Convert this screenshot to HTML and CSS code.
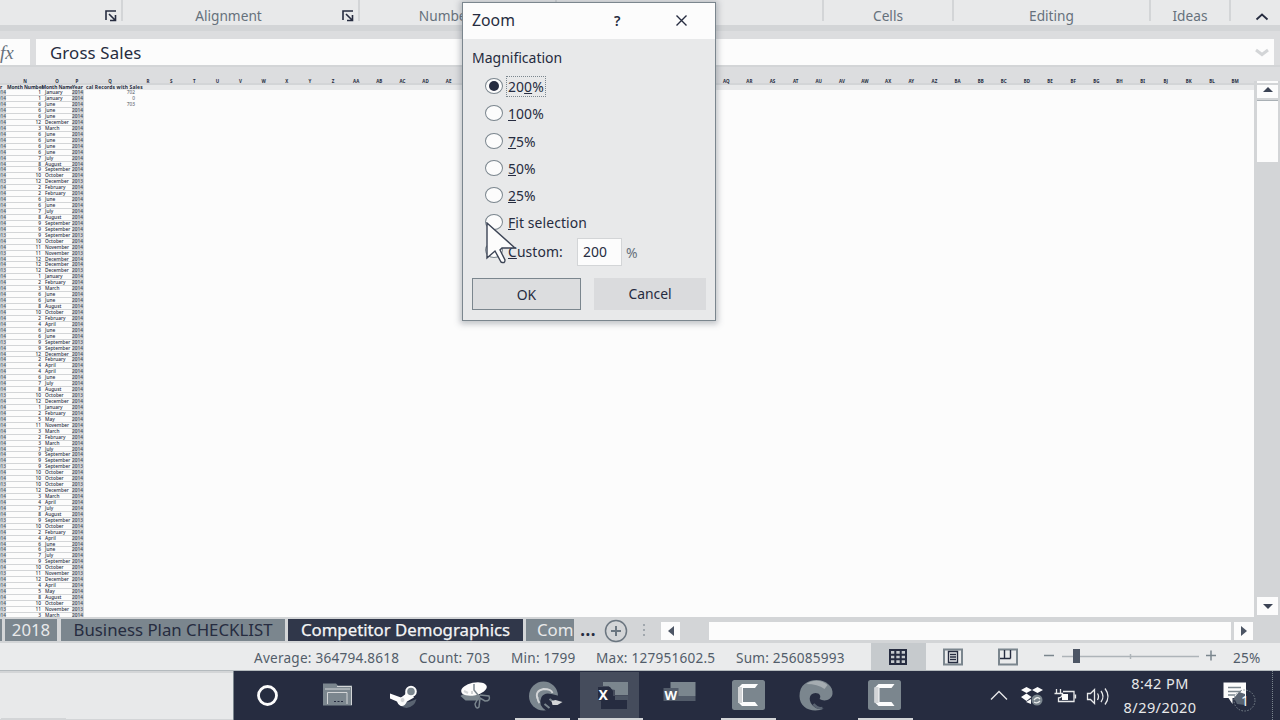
FILE: index.html
```html
<!DOCTYPE html>
<html lang="en">
<head>
<meta charset="utf-8">
<title>Zoom</title>
<link rel="stylesheet" href="styles.css">
</head>
<body>
<div class="screen">
  <header class="ribbon">
    <div class="group g-font"><svg class="launcher" viewBox="0 0 12 12"><path d="M1 10V1h10M4 4l6 6M10.500 5v5.500H5"/></svg></div>
    <div class="group g-align"><span>Alignment</span><svg class="launcher" viewBox="0 0 12 12"><path d="M1 10V1h10M4 4l6 6M10.500 5v5.500H5"/></svg></div>
    <div class="group g-number"><span>Number</span></div>
    <div class="group g-styles"></div>
    <div class="group g-cells"><span>Cells</span></div>
    <div class="group g-editing"><span>Editing</span></div>
    <div class="group g-ideas"><span>Ideas</span></div>
    <div class="collapse"><svg width="14" height="8" viewBox="0 0 14 8"><path d="M1.500 6.500L7 1.500l5.500 5"/></svg></div>
  </header>
  <div class="formula">
    <div class="fx"><i>f</i>x</div>
    <div class="entry"><span>Gross Sales</span><svg width="16" height="9" viewBox="0 0 16 9"><path d="M2 2l6 4.500L14 2"/></svg></div>
  </div>
  <div class="colheads" id="colheads"></div>
  <main class="sheet">
    <div class="cells">
      <div class="toprow"><span class="t0">r</span><span class="t1">Month Number</span><span class="t2">Month Name</span><span class="t3">Year</span><span class="t4">cal Records with Sales</span></div>
      <div class="body">
        <div class="rows" id="rows"></div>
        <div class="totals"><span>702</span><span>0</span><span>703</span></div>
      </div>
    </div>
    <div class="vscroll">
      <div class="arrow up"><svg width="10" height="5" viewBox="0 0 10 5"><path d="M0 5l5-5 5 5z"/></svg></div>
      <div class="thumb"></div>
      <div class="arrow down"><svg width="10" height="5" viewBox="0 0 10 5"><path d="M0 0l5 5 5-5z"/></svg></div>
    </div>
  </main>
  <div class="tabs">
    <div class="tab stub"></div>
    <div class="tab year">2018</div>
    <div class="tab plan">Business Plan CHECKLIST</div>
    <div class="tab active">Competitor Demographics</div>
    <div class="tab cut">Com</div>
    <div class="more">...</div>
    <svg class="plus" width="24" height="24" viewBox="0 0 24 24"><circle cx="12" cy="12" r="10.500"/><path d="M12 7v10M7 12h10"/></svg>
    <div class="grip"><i></i><i></i><i></i></div>
    <div class="harrow"><svg width="6" height="10" viewBox="0 0 6 10"><path d="M6 0v10L0 5z"/></svg></div>
    <div class="hthumb"></div>
    <div class="harrow right"><svg width="6" height="10" viewBox="0 0 6 10"><path d="M0 0v10l6-5z"/></svg></div>
  </div>
  <div class="status">
    <span class="s-avg">Average: 364794.8618</span>
    <span class="s-count">Count: 703</span>
    <span class="s-min">Min: 1799</span>
    <span class="s-max">Max: 127951602.5</span>
    <span class="s-sum">Sum: 256085993</span>
    <div class="view on"><svg width="20" height="18" viewBox="0 0 20 18"><path class="dk" d="M2 2h16v14H2zM2 6.700h16M2 11.300h16M7.300 2v14M12.700 2v14"/></svg></div>
    <div class="view"><svg width="20" height="18" viewBox="0 0 20 18"><path d="M1 1.500h18v15H1z"/><path class="dk thin" d="M5.500 3.500h9v11h-9zM7 6.500h6M7 9h6M7 11.500h6"/></svg></div>
    <div class="view"><svg width="20" height="18" viewBox="0 0 20 18"><path d="M1 1.500h18v15H1z"/><path class="dk thin" d="M6.500 2v8.500M12.500 2v8.500M2 10.500h10.500"/></svg></div>
    <svg class="zoombar" width="174" height="16" viewBox="1043 650 174 16"><path class="rail" d="M1062 657.500h137"/><path d="M1044 656.500h10M1206 656.500h10M1211 651.500v10"/><path class="rail" d="M1130.500 655v5"/><rect x="1073" y="650" width="7" height="14"/></svg>
    <span class="s-pct">25%</span>
  </div>
  <footer class="bottom">
    <div class="below"></div>
    <div class="taskbar">
      <div class="app"><svg viewBox="233.500 671 68 49"><circle cx="267" cy="695.500" r="9" fill="none" stroke="#fcfcfc" stroke-width="2.800"/></svg></div>
      <div class="app"><svg viewBox="302 671 68 49"><path fill="#7b868e" d="M322 683.500h13l2 2h14V705.500h-29z"/><path fill="none" stroke="#d3d5d7" d="M326.500 704v-11.500H346V704M324 689h25M336 686.500h14.500V705"/><path stroke="#262c40" stroke-dasharray="2 1.500" d="M333 701.500h9"/></svg></div>
      <div class="app"><svg viewBox="370.500 671 68 49"><path fill="#596371" d="M396 701q8 4 20-2-2 8-10 9-7-1-10-7z"/><path fill="#fcfcfc" d="M389.500 693.500l11 4 4-3 2-6 7 9-7 4q-3 6-7 4-2-1-3-4l-7-3z"/><circle cx="410.500" cy="691.500" r="4.800" fill="#7b868e" stroke="#fcfcfc" stroke-width="2"/><circle cx="402" cy="700" r="2.500" fill="#d3d5d7" stroke="#fcfcfc"/></svg></div>
      <div class="app"><svg viewBox="439 671 68 49"><path fill="#7b868e" d="M459.500 696l5 4.500h13l2-5-5-3-13 2z"/><ellipse cx="473" cy="689" rx="13" ry="6.300" transform="rotate(-12 473 689)" fill="#fcfcfc"/><path fill="none" stroke="#7b868e" stroke-width="1.500" d="M473 684v6l4 5M477 698l-3 6q1 6 4 3l1-9 5 3q6 0 4-5l-9-1"/><path stroke="#d3d5d7" stroke-width="2" d="M463 691l4 2M471 691v3"/></svg></div>
      <div class="app run"><svg viewBox="507.500 671 68 49"><circle cx="543" cy="696" r="14.500" fill="#7b868e"/><path fill="#262c40" d="M541 697q3-5 10-3l8 2v6l-3 8-10 1q-9-6-5-14z"/><path fill="none" stroke="#d3d5d7" stroke-width="1.800" d="M537 699q-3-8 6-10 8 0 9 4M537 697q0 4 2 6"/><path stroke="#7b868e" stroke-width="2" d="M544 704l5 4M549 699l4 3"/><path fill="#d3d5d7" d="M551 701l4-1 7 2-5 3h-5z"/></svg></div>
      <div class="app on"><svg viewBox="576 671 68 49"><path fill="#7b868e" d="M602 682h25v13h-13v-5l-5-1-1-3h-6z"/><path fill="#262c40" d="M597 687h12l3 4v5h14v13h-26v-8l-3-1z"/><path fill="#4c5564" d="M614 696h13v4h-13z"/><text x="597.500" y="700" class="letter" font-size="14">X</text></svg></div>
      <div class="app"><svg viewBox="644.500 671 68 49"><path fill="#7b868e" d="M670 682h25v14h-25z"/><path fill="#535c6a" d="M663 688h15v13h-15zM678 696h17v5h-17z"/><text x="664" y="700" class="letter" font-size="13">W</text></svg></div>
      <div class="app run"><svg viewBox="713 671 68 49"><rect x="731" y="680" width="33" height="30" rx="2.500" fill="#7b868e"/><path fill="#fcfcfc" d="M757 684h-16l-4 4v14l4 4h16l-3-4h-12v-14h12z"/><path fill="#d3d5d7" d="M737 687h4v16h-4z"/></svg></div>
      <div class="app"><svg viewBox="781.500 671 68 49"><path fill="#7b868e" d="M799 696c0-11 8-16 17-16 10 0 17 7 16 14-1 6-8 8-13 5 2-3 0-6-4-6-7 0-8 9-1 14 4 3 8 2 10 1-10 6-25 1-25-12z"/><path fill="#a5acb1" d="M806 684c6-5 16-4 21 1l-3 4q-7-5-18-5z"/><path fill="none" stroke="#596371" stroke-width="2.500" d="M813 704q4 5 9 4"/></svg></div>
      <div class="app run"><svg viewBox="850 671 68 49"><rect x="867" y="680" width="33" height="30" rx="2.500" fill="#7b868e"/><path fill="#fcfcfc" d="M893.500 684h-16l-4 4v14l4 4h16l-3-4h-12v-14h12z"/><path fill="#d3d5d7" d="M873.500 687h4v16h-4z"/></svg></div>
      <svg class="tray" width="130" height="30" viewBox="984 680 130 30"><path class="ln" d="M991 698.500l8-8 8 8"/><path fill="#fcfcfc" d="M1021 689l5.500-3 5.500 3 5.500-3 5.500 3-5.500 3-5.500-3-5.500 3zM1021 696l5.500-3.500 5 3.500-5 4zM1026 701l5-3v5z"/><circle cx="1037" cy="699" r="5.500" fill="#7b868e"/><path class="ln" d="M1034 699q3-4 6-1M1034 701q3 2 6-1"/><path class="ln" d="M1063 690.500h11v10h-14M1075.500 693.500v4M1056.500 688v4M1060.500 688v4M1054.500 692.500h8q0 4-4 4.500v3.500h3"/><path fill="#fcfcfc" d="M1062 693h6v6h-6z"/><path class="ln" d="M1087.500 692.500h3l4-4v14l-4-4h-3zM1097.500 692.500q2 3 0 6.500M1101 690q4 5.500 0 11M1105 687.500q6 8 0 16"/></svg>
      <div class="clock"><span class="time">8:42 PM</span><span>8/29/2020</span></div>
      <svg class="note" width="36" height="34" viewBox="1222 682 36 34"><path fill="#fcfcfc" d="M1223.500 685.500h22.500V701h-13.500v6l-4-6h-5z"/><path stroke="#7b868e" stroke-width="1.500" d="M1228 690.500h13M1228 694.500h13M1228 698h7"/><path fill="#596371" d="M1234 701l5-6 6 2v11l-8-1z"/><circle cx="1244.500" cy="703.500" r="10.500" fill="none" stroke="#7b868e" stroke-dasharray="1.500 1.500"/><text x="1241" y="709" font-size="14" fill="#fcfcfc">1</text></svg>
      <div class="peek"></div>
    </div>
  </footer>

  <section class="dialog">
    <div class="titlebar"><span class="name">Zoom</span><span class="help">?</span><svg width="11" height="11" viewBox="0 0 11 11"><path d="M.5.5l10 10M10.500.5l-10 10"/></svg></div>
    <div class="content">
      <div class="legend">Magnification</div>
      <div class="opt sel"><i></i><span class="focus">20<u>0</u>%</span></div>
      <div class="opt"><i></i><span><u>1</u>00%</span></div>
      <div class="opt"><i></i><span><u>7</u>5%</span></div>
      <div class="opt"><i></i><span><u>5</u>0%</span></div>
      <div class="opt"><i></i><span><u>2</u>5%</span></div>
      <div class="opt"><i></i><span><u>F</u>it selection</span></div>
      <div class="opt custom"><i></i><span><u>C</u>ustom:</span><b>200</b><em>%</em></div>
      <div class="buttons"><div class="ok">OK</div><div class="cancel">Cancel</div></div>
    </div>
    <svg class="cursor" width="34" height="44" viewBox="0 0 34 44"><path d="M2 1v35l8-7 6 11q4 2 4-2l-5-10 2-2h13z"/></svg>
  </section>
</div>
<script src="sheet.js"></script>
</body>
</html>
```
FILE: styles.css
```css
* { box-sizing: border-box; }
body { margin: 0; font-family: "Noto Sans", "Open Sans", sans-serif; color: #262c40; }
.screen { position: relative; width: 1280px; height: 720px; overflow: hidden; display: flex; flex-direction: column; background: #dcdddf; }
svg { display: block; flex: none; }
span { white-space: nowrap; }

.ribbon { height: 31px; flex: none; display: flex; background: #e8e9ea; border-bottom: 6px solid #d3d5d7; font-size: 13.700px; color: #66717c; }
.group { height: 21px; border-right: 2px solid #d3d5d7; display: flex; justify-content: center; line-height: 32px; position: relative; }
.launcher { position: absolute; right: 4px; top: 10px; width: 12px; height: 12px; fill: none; stroke: #262c40; stroke-width: 1.600; }
.g-font { width: 123px; }
.g-align { width: 237px; padding-right: 24px; }
.g-align .launcher { right: 4px; }
.g-number { width: 197px; padding-right: 24px; }
.g-styles { width: 267px; }
.g-cells { width: 130px; }
.g-editing { width: 197px; }
.g-ideas { width: 80px; }
.collapse { padding: 13px 0 0 24px; }
.collapse svg { fill: none; stroke: #262c40; stroke-width: 1.800; }

.formula { height: 34px; flex: none; padding: 8px 6px 0 0; display: flex; gap: 6px; }
.fx { width: 30px; background: #fcfcfc; font: italic 19px/28px "Liberation Serif", serif; color: #66717c; height: 26px; }
.entry { flex: 1; height: 26px; background: #fcfcfc; display: flex; justify-content: space-between; align-items: center; padding: 0 4px 0 14px; font-size: 16.800px; letter-spacing: .15px; line-height: 26px; }
.entry span { padding-top: 1px; }
.entry svg { fill: none; stroke: #d3d5d7; stroke-width: 3; }

.colheads { height: 20px; flex: none; position: relative; border-top: 2px solid #d3d5d7; border-bottom: 2px solid #d3d5d7; font-size: 4.500px; font-weight: 700; line-height: 6px; }
.colheads span { position: absolute; top: 11px; width: 20px; margin-left: -10px; text-align: center; }

.sheet { height: 532px; flex: none; display: flex; }
.cells { width: 1254px; background: #fcfcfc; }
.toprow { height: 5.300px; background: #e8e9ea; display: flex; font-size: 4.900px; font-weight: 700; line-height: 5px; }
.t0 { width: 7px; }
.t1 { width: 34.500px; letter-spacing: -.08px; }
.t2 { width: 30.500px; letter-spacing: -.08px; }
.t3 { width: 14px; }
.t4 { letter-spacing: .15px; }
.body { display: flex; height: 526.700px; overflow: hidden; }
.rows { width: 84px; }
.row { height: 5.943px; display: flex; font-size: 4.800px; font-weight: 500; line-height: 5.600px; }
.row span { border-bottom: 1px solid #d3d5d7; height: 5.943px; }
.c0 { width: 6px; background: #d3d5d7; color: #4c5564; direction: rtl; }
.c1 { width: 35px; text-align: right; }
.c2 { width: 31px; padding-left: 4px; }
.c3 { width: 12px; background: #d3d5d7; color: #3c4455; }
.totals { width: 51px; text-align: right; display: flex; flex-direction: column; font-size: 4.800px; line-height: 5.943px; color: #4c5564; }

.vscroll { width: 26px; background: #d3d5d7; padding: 0 2px 2px 3px; display: flex; flex-direction: column; margin-top: -4px; height: 536px; }
.arrow { height: 18px; background: #fcfcfc; display: flex; align-items: center; justify-content: center; flex: none; }
.arrow.up { height: 17px; }
.arrow.down { margin-top: auto; }
.arrow svg { fill: #3c4455; }
.thumb { height: 62px; margin-top: 2px; background: #fcfcfc; border-top: 1px solid #a9b0b5; }

.tabs { height: 26px; flex: none; display: flex; background: #d3d5d7; padding-top: 2px; }
.tab { height: 22px; line-height: 21px; font-size: 16.800px; text-align: center; white-space: nowrap; background: #7b868e; margin-right: 3px; flex: none; }
.stub { width: 2px; }
.year { width: 52px; color: #e8e9ea; margin-right: 4px; }
.plan { width: 224px; margin-right: 3px; }
.active { width: 235px; background: #30374a; color: #f4f5f6; -webkit-text-stroke: .25px #f4f5f6; }
.cut { width: 48px; overflow: hidden; text-align: left; padding-left: 11px; color: #e8e9ea; margin-right: 6px; }
.more { width: 24px; font-size: 19px; font-weight: 600; line-height: 20px; }
.plus { margin-top: 0; fill: none; stroke: #6b7680; stroke-width: 1.500; }
.plus path { stroke-width: 2; }
.grip { width: 33px; padding: 5px 0 0 15px; display: flex; flex-direction: column; gap: 3px; }
.grip i { width: 2px; height: 2px; background: #a0a7ad; }
.harrow { width: 19px; height: 18px; margin-top: 3px; background: #fcfcfc; display: flex; align-items: center; justify-content: center; }
.harrow svg { fill: #4c5564; }
.hthumb { width: 522px; height: 18px; margin: 3px 3px 0 29px; background: #fcfcfc; }

.status { height: 28px; flex: none; display: flex; align-items: center; background: #eaebec; border-bottom: 1px solid #b4babe; padding-left: 254px; font-size: 13.600px; letter-spacing: .22px; color: #525d6a; }
.status span { padding-top: 1px; }
.s-avg { width: 165px; }
.s-count { width: 92px; }
.s-min { width: 85px; }
.s-max { width: 140px; }
.s-sum { width: 135px; }
.view { width: 55px; height: 27px; padding-right: 1px; display: flex; align-items: center; justify-content: center; }
.view.on { background: #c6cacd; }
.view svg { fill: none; stroke: #7b868e; stroke-width: 2; }
.view .dk { stroke: #262c40; }
.view .thin { stroke-width: 1.400; }
.zoombar { margin-left: 7px; fill: #4c5564; stroke: #7b868e; stroke-width: 1.500; }
.zoombar rect { stroke: none; }
.zoombar .rail { stroke: #aeb4b9; stroke-width: 1.500; }
.s-pct { margin-left: 16px; }

.bottom { height: 49px; flex: none; display: flex; background: #e8e9ea; }
.below { width: 233px; border-top: 2px solid #d3d5d7; border-bottom: 1px solid #d3d5d7; }
.taskbar { flex: 1; background: #262c40; display: flex; border-left: 1px solid #7b868e; align-items: center; }
.app { width: 68.500px; flex: none; height: 49px; position: relative; }
.app svg { width: 68px; height: 49px; position: relative; }
.app.on::before { content: ""; position: absolute; left: 3px; top: 1px; width: 59px; height: 46px; background: #454c5c; }
.run::after, .on::after { content: ""; position: absolute; left: 7px; bottom: 0; width: 55px; height: 2px; background: #d3d5d7; }
.on::after { left: 1px; width: 65px; }
.letter { font-family: "Noto Sans", sans-serif; font-weight: 700; fill: #fcfcfc; }
.tray { margin-left: 65px; }
.tray .ln { fill: none; stroke: #e8e9ea; stroke-width: 1.300; }
.clock { width: 92px; color: #e8e9ea; display: flex; flex-direction: column; align-items: center; font-size: 14.500px; letter-spacing: .45px; line-height: 23.500px; }
.note { margin-left: 16px; }
.peek { margin-left: 14px; height: 49px; border-left: 1px dotted #7b868e; }

.dialog { position: absolute; left: 462px; top: 2px; width: 254px; height: 319px; border: 1px solid #7b868e; background: #e8e9ea; box-shadow: 0 1px 6px 2px rgba(80,90,100,.35); font-size: 13.900px; }
.titlebar { height: 36px; background: #fcfcfc; display: flex; align-items: center; padding-left: 9px; font-size: 15.800px; }
.name { width: 142px; margin-top: -2px; }
.help { width: 62px; font-size: 14px; font-weight: 600; margin-top: -2px; }
.titlebar svg { fill: none; stroke: #262c40; stroke-width: 1.400; margin-top: -1px; }
.content { padding: 9px 8px 0 9px; }
.legend { height: 24px; line-height: 19px; font-size: 14px; }
.opt { height: 27.300px; display: flex; align-items: flex-start; padding-left: 13px; }
.opt > i { width: 18px; height: 16px; margin-top: 6px; border: 1.500px solid #7b868e; border-radius: 50%; background: #fcfcfc; flex: none; display: flex; align-items: center; justify-content: center; }
.sel > i::before { content: ""; width: 10px; height: 10px; border-radius: 50%; background: #262c40; }
.opt > span { margin-left: 4px; padding: 0 1px; line-height: 19px; margin-top: 5px; letter-spacing: .1px; }
.opt .focus { outline: 1px dotted #7b868e; }
.opt u { text-underline-offset: 1px; }
.custom { height: 30px; }
.custom > span { width: 70px; margin-top: 6px; }
.custom b { font-weight: 400; width: 45px; height: 28px; flex: none; margin-top: 2px; background: #fcfcfc; border: 1px solid #d3d5d7; line-height: 25px; padding-left: 5px; }
.custom em { font-style: normal; margin: 7px 0 0 4px; color: #66717c; }
.buttons { display: flex; gap: 13px; margin-top: 12px; text-align: center; line-height: 31px; }
.ok { width: 109px; height: 32px; border: 1px solid #7b868e; background: #dcdddf; }
.cancel { width: 112px; height: 32px; background: #dadbdd; }
.cursor { position: absolute; left: 22px; top: 219px; fill: #fcfcfc; stroke: #3c4455; stroke-width: 1.400; }
```
FILE: sheet.js
```js
const names = ["January","February","March","April","May","June","July","August","September","October","November","December"];
const months = [
  1,1,6,6,6,12,3,6,6,6,6,7,8,9,10,12,2,2,6,6,7,8,9,9,9,10,11,11,
  12,12,12,1,2,3,6,6,8,10,2,4,6,6,9,9,12,2,4,4,6,7,8,10,12,1,2,5,11,3,
  2,3,7,9,9,9,10,10,10,12,3,4,7,8,9,10,2,4,6,6,7,9,10,11,12,4,5,8,10,11,3
];
document.getElementById("rows").innerHTML = months.map((m, i) => {
  const year = m >= 9 && i % 3 === 0 ? 2013 : 2014;
  return `<div class="row"><span class="c0">${year}</span><span class="c1">${m}</span><span class="c2">${names[m - 1]}</span><span class="c3">${year}</span></div>`;
}).join("");

const heads = [["N", 25], ["O", 57], ["P", 77], ["Q", 110]];
const letter = n => n < 26 ? String.fromCharCode(65 + n) : letter(Math.floor(n / 26) - 1) + letter(n % 26);
for (let n = 17; n <= 64; n++) {
  const x = 148 + (n - 17) * 23.13;
  // The dialog covers the headings between its edges.
  if (x < 455 || x > 720) heads.push([letter(n), x]);
}
document.getElementById("colheads").innerHTML = heads.map(([t, x]) => `<span style="left:${x}px">${t}</span>`).join("");
```
